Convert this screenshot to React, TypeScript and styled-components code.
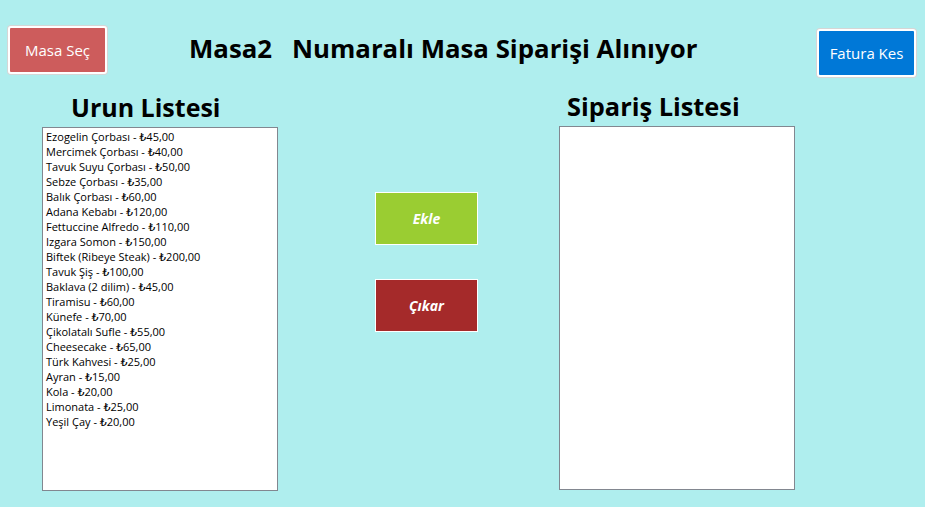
import React from "react";
import styled, { createGlobalStyle } from "styled-components";

const Global = createGlobalStyle`
  html, body { margin: 0; padding: 0; background: #afeeee; }
  body { font-family: "Open Sans", "DejaVu Sans", sans-serif; }
`;

const Page = styled.div`
  width: 925px;
  height: 507px;
  background: #afeeee;
  display: flex;
  flex-direction: column;
  overflow: hidden;
`;

const TopBar = styled.div`
  display: flex;
  align-items: flex-start;
  padding: 26px 9px 0 8px;
  height: 78px;
  box-sizing: border-box;
`;

const ActionButton = styled.button<{ $bg: string; $top: number }>`
  width: 99px;
  height: 48px;
  margin-top: ${(p) => p.$top}px;
  background: ${(p) => p.$bg};
  border: 2px solid #ffffff;
  border-radius: 3px;
  box-shadow: 0 0 0 1px #d6d6d6;
  color: #ffffff;
  font-family: "Open Sans", sans-serif;
  font-size: 15px;
  padding: 0;
  cursor: pointer;
`;

const Title = styled.div`
  flex: 1;
  display: flex;
  gap: 20px;
  margin: 4px 0 0 82px;
  font-size: 25.8px;
  font-weight: 700;
  color: #000;
`;

const Main = styled.div`
  display: flex;
  align-items: flex-start;
  padding-left: 42px;
`;

const Column = styled.div<{ $shift: number }>`
  display: flex;
  flex-direction: column;
  width: 236px;
  margin-top: ${(p) => p.$shift}px;
`;

const ListTitle = styled.div<{ $indent: number; $size: number }>`
  font-size: ${(p) => p.$size}px;
  font-weight: 700;
  color: #000;
  height: 49px;
  line-height: 58px;
  padding-left: ${(p) => p.$indent}px;
  overflow: visible;
  white-space: nowrap;
`;

const ListBox = styled.div`
  width: 236px;
  height: 364px;
  box-sizing: border-box;
  background: #fff;
  border: 1px solid #828790;
  padding: 1px 3px;
`;

const Item = styled.div`
  font-size: 11px;
  line-height: 15px;
  color: #000;
  white-space: nowrap;
`;

const Middle = styled.div`
  width: 281px;
  display: flex;
  flex-direction: column;
  align-items: center;
  gap: 34px;
  padding: 114px 0 0 16px;
  box-sizing: border-box;
`;

const MoveButton = styled.button<{ $bg: string }>`
  width: 103px;
  height: 53px;
  background: ${(p) => p.$bg};
  border: 1px solid #fff;
  color: #fff;
  font-family: "Open Sans", sans-serif;
  font-size: 14px;
  font-weight: 700;
  font-style: italic;
  padding: 0;
  cursor: pointer;
`;

const items = [
  "Ezogelin Çorbası - ₺45,00",
  "Mercimek Çorbası - ₺40,00",
  "Tavuk Suyu Çorbası - ₺50,00",
  "Sebze Çorbası - ₺35,00",
  "Balık Çorbası - ₺60,00",
  "Adana Kebabı - ₺120,00",
  "Fettuccine Alfredo - ₺110,00",
  "Izgara Somon - ₺150,00",
  "Biftek (Ribeye Steak) - ₺200,00",
  "Tavuk Şiş - ₺100,00",
  "Baklava (2 dilim) - ₺45,00",
  "Tiramisu - ₺60,00",
  "Künefe - ₺70,00",
  "Çikolatalı Sufle - ₺55,00",
  "Cheesecake - ₺65,00",
  "Türk Kahvesi - ₺25,00",
  "Ayran - ₺15,00",
  "Kola - ₺20,00",
  "Limonata - ₺25,00",
  "Yeşil Çay - ₺20,00",
];

export default function App() {
  return (
    <Page>
      <Global />
      <TopBar>
        <ActionButton $bg="#cd5c5c" $top={0}>Masa Seç</ActionButton>
        <Title>
          <span>Masa2</span>
          <span>Numaralı Masa Siparişi Alınıyor</span>
        </Title>
        <ActionButton $bg="#0078d7" $top={3}>Fatura Kes</ActionButton>
      </TopBar>
      <Main>
        <Column $shift={0}>
          <ListTitle $indent={29} $size={25}>Urun Listesi</ListTitle>
          <ListBox>
            {items.map((t) => (
              <Item key={t}>{t}</Item>
            ))}
          </ListBox>
        </Column>
        <Middle>
          <MoveButton $bg="#9acd32">Ekle</MoveButton>
          <MoveButton $bg="#a52a2a">Çıkar</MoveButton>
        </Middle>
        <Column $shift={-1}>
          <ListTitle $indent={8} $size={25.4}>Sipariş Listesi</ListTitle>
          <ListBox />
        </Column>
      </Main>
    </Page>
  );
}
